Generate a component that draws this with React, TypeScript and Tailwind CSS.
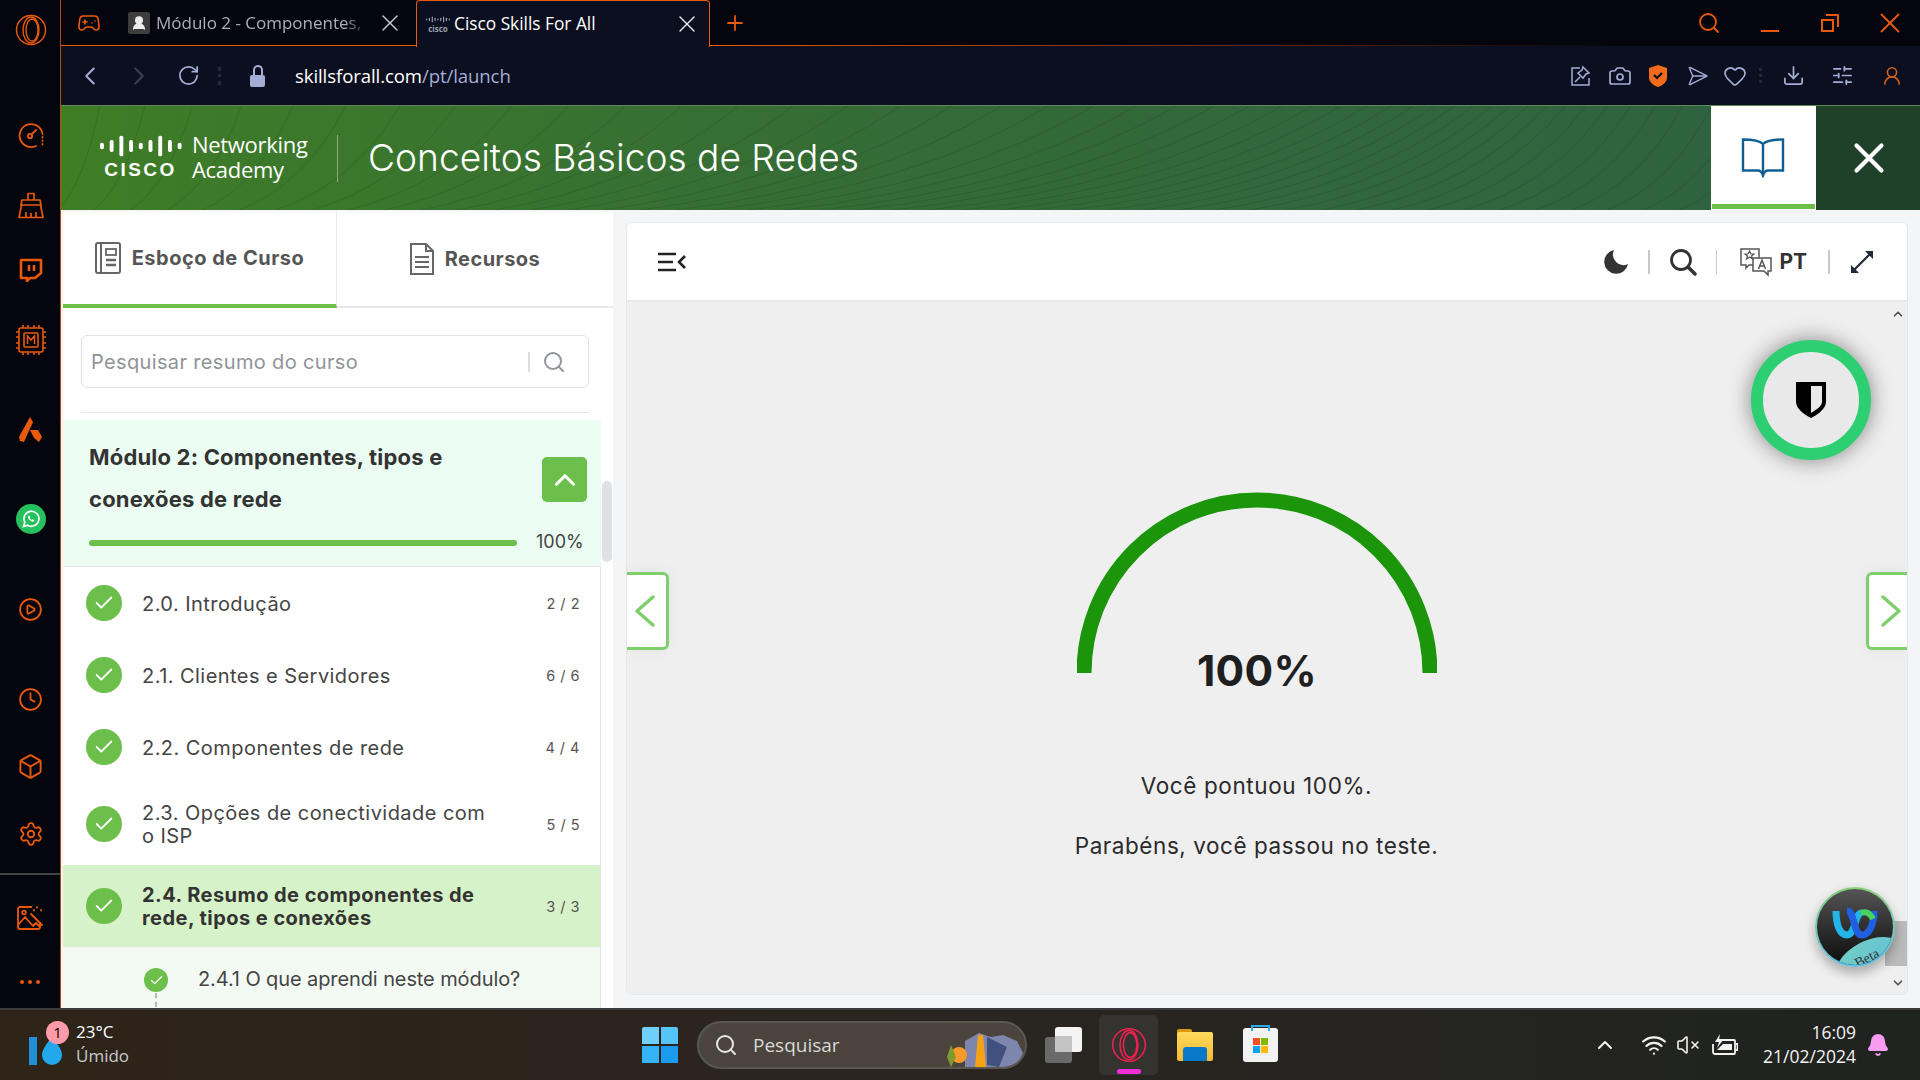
import React from "react";
import { Gamepad2, ChevronRight, RotateCw, Camera, Send, Heart, Download, SlidersHorizontal, UserRound, Search, X, Plus, Clock, Box, Settings, CirclePlay, Check, ChevronUp, ChevronDown, ChevronLeft, Wifi, VolumeX, Bell } from "lucide-react";

const O = "#e8590c";

function OperaLogo({ size = 32, color = O }: { size?: number; color?: string }) {
  return (
    <svg width={size} height={size} viewBox="0 0 32 32" fill="none" stroke={color} strokeWidth="1.4">
      <circle cx="16" cy="16" r="14.5" />
      <ellipse cx="16" cy="16" rx="8" ry="13" />
      <ellipse cx="17" cy="16" rx="6" ry="11" />
    </svg>
  );
}

function GaugeIcon() {
  return (
    <svg width="26" height="26" viewBox="0 0 26 26" fill="none" stroke={O} strokeWidth="1.8" strokeLinecap="round">
      <path d="M18 24A11.500 11.500 0 1 1 24.500 12" />
      <circle cx="12" cy="14" r="2.200" />
      <path d="M13.500 12.500L18 8" />
      <path d="M24.500 15v.5M24.500 18.500v.5M24.500 22v.5" />
    </svg>
  );
}

function TwitchIcon() {
  return (
    <svg width="24" height="24" viewBox="0 0 24 24" fill="none" stroke={O} strokeWidth="2.600" strokeLinejoin="round">
      <path d="M2 2h20v13l-6 5h-5l-3 3v-3H2z" />
      <path d="M10 7v6M15 7v6" />
    </svg>
  );
}

function PicturesIcon() {
  return (
    <svg width="28" height="26" viewBox="0 0 28 26" fill="none" stroke={O} strokeWidth="1.800" strokeLinejoin="round">
      <path d="M16 2H4a2 2 0 0 0-2 2v18a2 2 0 0 0 2 2h18a2 2 0 0 0 2-2v-5" />
      <path d="M2 20l7-8 8 9 3-3 4 4" />
      <circle cx="8" cy="7.500" r="1.800" />
      <path d="M15 9l11 11M21 2v.5M25 5v.5M18 5v.5" strokeLinecap="round" />
    </svg>
  );
}

function ChipIcon() {
  return (
    <svg width="32" height="32" viewBox="0 0 32 32" fill="none" stroke={O} strokeWidth="1.6">
      <rect x="4" y="4" width="24" height="24" rx="2" />
      <rect x="9" y="9" width="14" height="14" rx="1" />
      <path d="M8 1v3M13 1v3M19 1v3M24 1v3M8 28v3M13 28v3M19 28v3M24 28v3M1 8h3M1 13h3M1 19h3M1 24h3M28 8h3M28 13h3M28 19h3M28 24h3" />
      <path d="M12.5 20v-8l3.5 4 3.5-4v8" strokeWidth="1.5" />
    </svg>
  );
}

function BrushIcon() {
  return (
    <svg width="26" height="28" viewBox="0 0 26 28" fill="none" stroke={O} strokeWidth="1.7" strokeLinejoin="round">
      <path d="M10 9V2.500h6V9" />
      <path d="M4 9h18l1 5H3z" />
      <path d="M3.500 14L1 26.500h24L22.500 14M8 26v-5M13 26v-4M18 26v-5" />
    </svg>
  );
}

function AriaIcon() {
  return (
    <svg width="24" height="26" viewBox="0 0 24 26" fill={O}>
      <path d="M11 0l3 5L5 25 1 24 0 20z" />
      <path d="M11 13l8 0 4 7-3 5-5-4-3-6z" />
    </svg>
  );
}

function WhatsApp() {
  return (
    <div className="w-[30px] h-[30px] rounded-full bg-[#25c15f] flex items-center justify-center">
      <svg width="20" height="20" viewBox="0 0 24 24" fill="none" stroke="white" strokeWidth="2">
        <path d="M3 21l1.600-5A9 9 0 1 1 8 19.500z" />
        <path d="M9 8c-1 1-.8 2.800.8 4.700 1.700 1.900 3.700 3 5.200 2.300l1-1.500-2.200-1.200-1 .8c-1-.4-2-1.500-2.400-2.500l.8-1L10 8z" fill="white" stroke="none" />
      </svg>
    </div>
  );
}

const railItems: { h: number; el: React.ReactNode }[] = [
  { h: 60, el: <OperaLogo /> },
  { h: 39, el: null },
  { h: 72, el: <GaugeIcon /> },
  { h: 68, el: <BrushIcon /> },
  { h: 62, el: <TwitchIcon /> },
  { h: 78, el: <ChipIcon /> },
  { h: 102, el: <AriaIcon /> },
  { h: 76, el: <WhatsApp /> },
  { h: 104, el: <CirclePlay size={25} color={O} strokeWidth={1.7} /> },
  { h: 76, el: <Clock size={25} color={O} strokeWidth={1.7} /> },
  { h: 58, el: <Box size={27} color={O} strokeWidth={1.7} /> },
  { h: 78, el: <Settings size={26} color={O} strokeWidth={1.7} /> },
];

function Rail() {
  return (
    <aside className="w-[61px] shrink-0 bg-[#05060d] border-r border-[#b84a10] flex flex-col">
      {railItems.map((it, i) => (
        <div key={i} className="flex items-center justify-center shrink-0 pl-[1px]" style={{ height: it.h }}>
          {it.el}
        </div>
      ))}
      <div className="h-[2px] bg-[#444]" />
      <div className="h-[86px] flex items-center justify-center">
        <PicturesIcon />
      </div>
      <div className="h-[42px] flex items-center justify-center gap-[4px]">
        <span className="w-[4px] h-[4px] rounded-full bg-[#e8590c]" />
        <span className="w-[4px] h-[4px] rounded-full bg-[#e8590c]" />
        <span className="w-[4px] h-[4px] rounded-full bg-[#e8590c]" />
      </div>
    </aside>
  );
}

function CiscoBars({ color = "white", w = 82, h = 23 }: { color?: string; w?: number; h?: number }) {
  const bars = [[0, 6], [9, 11], [18, 19], [27, 11], [36, 6], [45, 11], [54, 19], [63, 11], [72, 6]];
  return (
    <svg width={w} height={h} viewBox="0 0 76 20" fill={color}>
      {bars.map(([x, bh], i) => (
        <rect key={i} x={x} y={(20 - bh) / 2} width="3.600" height={bh} rx="1.500" />
      ))}
    </svg>
  );
}

function TabBar() {
  return (
    <div className="h-[46px] shrink-0 bg-[#05060d] flex items-center relative font-['Open_Sans',sans-serif]">
      <div className="w-[54px] flex justify-center ml-[1px]">
        <Gamepad2 size={24} color={O} strokeWidth={1.6} />
      </div>
      <div className="flex items-center w-[288px] ml-[12px] h-full">
        <div className="w-[22px] h-[22px] bg-[#3d3d3d] rounded-[2px] flex items-center justify-center shrink-0">
          <UserRound size={16} color="#eee" fill="#eee" />
        </div>
        <span className="ml-[6px] text-[17px] text-[#aab0bb] w-[210px] overflow-hidden whitespace-nowrap [mask-image:linear-gradient(to_right,black_90%,transparent)]">Módulo 2 - Componentes, t</span>
        <X size={28} color="#c9ccd4" strokeWidth={1.2} className="ml-[10px]" />
      </div>
      <div className="h-[47px] w-[294px] -mb-[1px] bg-[#0c0f1f] border border-b-0 border-[#e8590c] rounded-t-[4px] flex items-center pl-[9px] relative z-10">
        <div className="flex flex-col items-center w-[24px] shrink-0 leading-none">
          <CiscoBars color="#9aa0ad" w={24} h={9} />
          <span className="text-[8px] font-bold text-[#9aa0ad] leading-[9px]">cisco</span>
        </div>
        <span className="ml-[4px] text-[17.300px] text-white whitespace-nowrap">Cisco Skills For All</span>
        <X size={28} color="#e8e8ee" strokeWidth={1.2} className="ml-auto mr-[8px]" />
      </div>
      <div className="ml-[13px]"><Plus size={24} color={O} strokeWidth={1.8} /></div>
      <div className="ml-auto flex items-center h-full">
        <Search size={24} color={O} strokeWidth={1.8} className="mr-[40px]" />
        <div className="w-[18px] h-[2px] bg-[#e8590c] mt-[16px] mr-[42px]" />
        <div className="relative w-[18px] h-[18px] mr-[34px]">
          <div className="absolute left-0 bottom-0 w-[13px] h-[13px] border-2 border-[#e8590c]" />
          <div className="absolute right-0 top-0 w-[13px] h-[13px] border-t-2 border-r-2 border-[#e8590c] rounded-tr-[2px]" />
        </div>
        <X size={34} color={O} strokeWidth={1.3} className="mr-[13px]" />
      </div>
      <div className="absolute left-0 bottom-0 w-[356px] h-px bg-[#e8590c]" />
      <div className="absolute left-[649px] bottom-0 w-[900px] h-px bg-gradient-to-r from-[#e8590c] to-transparent" />
    </div>
  );
}

function AddressBar() {
  const c = "#a3aed6";
  return (
    <div className="h-[59px] shrink-0 bg-[#0c0f1f] flex items-center font-['Open_Sans',sans-serif]">
      <ChevronLeft size={30} color={c} strokeWidth={1.6} className="ml-[14px]" />
      <ChevronRight size={30} color="#3a4056" strokeWidth={1.6} className="ml-[19px]" />
      <RotateCw size={23} color={c} strokeWidth={1.8} className="ml-[23px]" />
      <div className="ml-[18px] w-[3px] h-[18px] border-l-[3px] border-dotted border-[#22283f]" />
      <div className="ml-[29px] w-[15px] h-[22px] flex flex-col items-center">
        <div className="w-[10px] h-[10px] border-2 border-b-0 border-[#a3aed6] rounded-t-[5px]" />
        <div className="w-[15px] h-[12px] bg-[#a3aed6] rounded-[2px]" />
      </div>
      <div className="ml-[30px] text-[18.600px] tracking-[-0.1px]">
        <span className="text-white">skillsforall.com</span>
        <span className="text-[#a3aed6]">/pt/launch</span>
      </div>
      <div className="ml-auto flex items-center">
        <svg width="22" height="22" viewBox="0 0 22 22" fill="none" stroke={c} strokeWidth="1.5" className="mr-[16px]">
          <path d="M10 3H2v17h17v-7" />
          <path d="M5 17l5-5M13 2l6 6-3 1-3 4-5-5 4-3z" />
        </svg>
        <Camera size={24} color={c} strokeWidth={1.7} className="mr-[16px]" />
        <svg width="20" height="24" viewBox="0 0 20 24" className="mr-[15px]">
          <path d="M10 1l9 3v10c0 4-5 8-9 9-4-1-9-5-9-9V4z" fill="#f26a1b" />
          <path d="M6 11l3 3 5-5" fill="none" stroke="#0c0f1f" strokeWidth="2.200" />
        </svg>
        <Send size={22} color={c} strokeWidth={1.5} className="mr-[18px] rotate-45" />
        <Heart size={24} color={c} strokeWidth={1.7} className="mr-[12px]" />
        <div className="w-[3px] h-[15px] border-l-[3px] border-dotted border-[#22283f] mr-[20px]" />
        <Download size={23} color={c} strokeWidth={1.8} className="mr-[26px]" />
        <SlidersHorizontal size={23} color={c} strokeWidth={1.8} className="mr-[27px]" />
        <UserRound size={22} color="#c9601e" strokeWidth={1.8} className="mr-[17px]" />
      </div>
    </div>
  );
}

function GreenLines() {
  const starts = Array.from({ length: 66 }, (_, i) => -400 + i * 36);
  return (
    <svg className="absolute inset-0" width="1650" height="105" viewBox="0 0 1650 105" fill="none" stroke="#000" strokeOpacity="0.11" strokeWidth="1">
      {starts.map((x, i) => {
        const p = Math.max(0, Math.min(1, (x + 100) / 1750));
        const run = 30 + 300 * Math.pow(Math.sin(Math.PI * p), 2) + 70 * p;
        return <path key={i} d={`M${x} 105 Q ${x + run * 0.62} ${80} ${x + run} 0`} />;
      })}
    </svg>
  );
}

function Header() {
  return (
    <div className="h-[105px] shrink-0 flex border-t border-[#5d8a5d]">
      <div className="flex-1 relative flex items-center bg-gradient-to-r from-[#3f7d25] via-[#346b36] to-[#2f6340] overflow-hidden">
        <GreenLines />
        <div className="relative ml-[37px] w-[85px] flex flex-col items-center text-white">
          <CiscoBars w={82} h={24} />
          <span className="text-[19px] font-bold tracking-[2.500px] leading-[24px] font-['Liberation_Sans',sans-serif]">CISCO</span>
        </div>
        <div className="relative ml-[9px] text-white text-[22px] leading-[25px] font-['Open_Sans',sans-serif] w-[135px] -mt-[3px] whitespace-nowrap">
          <div className="tracking-[-0.3px]">Networking</div>
          <div className="tracking-[-0.3px]">Academy</div>
        </div>
        <div className="relative w-px h-[47px] bg-white/40 ml-[10px]" />
        <div className="relative ml-[30px] -mt-[1px] text-white text-[37.150px] font-light font-['Inter',sans-serif] whitespace-nowrap">Conceitos Básicos de Redes</div>
      </div>
      <div className="w-[105px] bg-white flex flex-col items-center relative">
        <svg width="44" height="40" viewBox="0 0 44 40" fill="none" stroke="#0f5f92" strokeWidth="2.400" className="mt-[32px] -ml-[2px]">
          <path d="M22 6C18 2 8 1.500 2 1.500v31h15c3 0 4 2 5 5 1-3 2-5 5-5h15v-31C36 1.500 26 2 22 6zM22 6v29" />
        </svg>
        <div className="absolute left-[1px] right-[1px] bottom-[1px] h-[5px] bg-[#6cc04a]" />
      </div>
      <div className="w-[104px] bg-[#1f4029] flex items-center justify-center pl-[2px]">
        <X size={50} color="white" strokeWidth={2} />
      </div>
    </div>
  );
}

const rows = [
  { t: "2.0. Introdução", n: "2 / 2", h: 72 },
  { t: "2.1. Clientes e Servidores", n: "6 / 6", h: 72 },
  { t: "2.2. Componentes de rede", n: "4 / 4", h: 72 },
  { t: "2.3. Opções de conectividade com o ISP", n: "5 / 5", h: 82 },
  { t: "2.4. Resumo de componentes de rede, tipos e conexões", n: "3 / 3", h: 82, active: true },
];

function CheckDot({ size = 36, icon = 22 }: { size?: number; icon?: number }) {
  return (
    <div className="rounded-full bg-[#6cbf4b] flex items-center justify-center shrink-0" style={{ width: size, height: size }}>
      <Check size={icon} color="white" strokeWidth={2} />
    </div>
  );
}

function LeftPanel() {
  return (
    <div className="w-[550px] shrink-0 bg-white flex flex-col overflow-hidden relative mt-[2px] ml-[2px] font-['Inter',sans-serif]">
      <div className="h-[96px] flex shrink-0 border-b-2 border-[#e8e9eb] text-[#555]">
        <div className="w-[274px] -mb-[2px] border-b-4 border-[#6cbf4b] border-r border-r-[#e8e9eb] flex items-center justify-center gap-[11px] font-bold">
          <svg width="26" height="32" viewBox="0 0 26 32" fill="none" stroke="#666" strokeWidth="2">
            <rect x="1" y="1" width="24" height="30" rx="2" />
            <path d="M6 1v30" />
            <rect x="11" y="7" width="10" height="6" strokeWidth="1.800" />
            <path d="M11 18h10M11 23h10" strokeWidth="2.400" />
          </svg>
          <span className="text-[20px] tracking-[0.5px]">Esboço de Curso</span>
        </div>
        <div className="flex-1 flex items-center justify-center gap-[11px] font-bold">
          <svg width="24" height="32" viewBox="0 0 24 32" fill="none" stroke="#666" strokeWidth="2">
            <path d="M1 1h15l7 7v23H1z" />
            <path d="M16 1v7h7M5 14h14M5 19h14M5 24h14" />
          </svg>
          <span className="text-[20px] tracking-[0.45px]">Recursos</span>
        </div>
      </div>
      <div className="ml-[18px] mr-[24px] mt-[27px] h-[53px] shrink-0 border border-[#e0e2e5] rounded-[6px] flex items-center pl-[9px]">
        <span className="text-[20px] tracking-[0.35px] text-[#8f9499] flex-1">Pesquisar resumo do curso</span>
        <div className="w-[2px] h-[20px] bg-[#ddd] mr-[12px]" />
        <Search size={24} color="#8f9499" strokeWidth={2} className="mr-[22px]" />
      </div>
      <div className="ml-[18px] mr-[24px] mt-[24px] h-px shrink-0 bg-[#e6e7e9]" />
      <div className="mt-[7px] w-[538px] h-[147px] shrink-0 bg-[#ebfcf2] border-b border-[#e3e5e7] flex flex-col pl-[26px] pr-[14px]">
        <div className="flex items-start">
          <div className="flex-1 text-[22px] font-bold leading-[42px] tracking-[0.2px] text-[#333] pt-[16px] pr-[30px]">Módulo 2: Componentes, tipos e conexões de rede</div>
          <div className="w-[45px] h-[45px] mt-[37px] rounded-[5px] bg-[#6cbf4b] flex items-center justify-center shrink-0">
            <ChevronUp size={34} color="white" strokeWidth={2.200} />
          </div>
        </div>
        <div className="flex items-center mt-[11px]">
          <div className="w-[428px] h-[6px] rounded-full bg-[#6cbf4b]" />
          <span className="ml-[19px] text-[18px] text-[#444] -mt-[3px]">100%</span>
        </div>
      </div>
      <div className="w-[538px] border-r border-[#e6e7e9] flex-1">
        {rows.map((r) => (
          <div key={r.t} className={`flex items-center pl-[23px] pr-[20px] ${r.active ? "bg-[#d6f2c8]" : ""}`} style={{ height: r.h }}>
            <CheckDot />
            <div className={`ml-[20px] mt-[2px] w-[350px] text-[20px] leading-[23px] tracking-[0.45px] ${r.active ? "font-bold text-[#333]" : "text-[#444]"}`}>{r.t}</div>
            <div className="ml-auto mt-[1px] text-[14.500px] text-[#555] tracking-[0.5px]">{r.n}</div>
          </div>
        ))}
        <div className="bg-[#f3faf3] h-[61px] flex pl-[81px] relative">
          <div className="mt-[21px] flex flex-col items-center">
            <CheckDot size={24} icon={15} />
            <div className="h-[14px] mt-[1px] border-l-2 border-dashed border-[#b5b5b5]" />
          </div>
          <div className="ml-[30px] mt-[20px] text-[20px] tracking-[-0.1px] text-[#444] leading-[24px]">2.4.1 O que aprendi neste módulo?</div>
        </div>
      </div>
      <div className="absolute right-[1px] top-[269px] w-[10px] h-[81px] rounded-full bg-[#dfe1e5]" />
    </div>
  );
}

function Translate() {
  return (
    <svg width="34" height="30" viewBox="0 0 34 30" fill="none" stroke="#555" strokeWidth="1.500">
      <path d="M2 2h18v16H10l-3 3v-3H2z" fill="white" />
      <path d="M14 11h18v13h-3v4l-4-4H14z" fill="white" />
      <path d="M10.500 4l1.500 3h3l-2.500 2 1 3-3-2-3 2 1-3-2.500-2h3z" strokeWidth="1.200" />
      <path d="M19.500 22l3.500-9 3.500 9M20.800 19h4.400" />
    </svg>
  );
}

function NavChevron({ right = false }: { right?: boolean }) {
  return (
    <svg width="20" height="32" viewBox="0 0 20 32" fill="none" stroke="#80cf6f" strokeWidth="3.500" strokeLinecap="round" strokeLinejoin="round">
      <path d={right ? "M2 2l16 14L2 30" : "M18 2L2 16l16 14"} />
    </svg>
  );
}

function RightPanel() {
  return (
    <div className="w-[1282px] h-[773px] ml-[13px] mt-[12px] flex flex-col rounded-[6px] border border-[#e6e7e9] overflow-hidden font-['Inter',sans-serif] relative">
      <div className="h-[79px] shrink-0 bg-white flex items-center border-b-2 border-[#e8e9eb]">
        <svg width="30" height="20" viewBox="0 0 30 20" fill="none" stroke="#222" strokeWidth="2.600" className="ml-[30px]">
          <path d="M1 2h18M1 10h15M1 18h18M28 4l-6 6 6 6" />
        </svg>
        <div className="ml-auto flex items-center">
          <svg width="25" height="25" viewBox="0 0 25 25" className="mr-[19px]">
            <path d="M10 1A12 12 0 1 0 24 15 10.500 10.500 0 0 1 10 1z" fill="#333" />
          </svg>
          <div className="w-[2px] h-[24px] bg-[#c8c8c8] mr-[19px]" />
          <svg width="28" height="28" viewBox="0 0 28 28" fill="none" stroke="#333" strokeWidth="2.800" className="mr-[19px]">
            <circle cx="12" cy="12" r="9.500" />
            <path d="M19 19l7 7" strokeWidth="3.500" strokeLinecap="round" />
          </svg>
          <div className="w-px h-[24px] bg-[#c8c8c8] mr-[22px]" />
          <Translate />
          <span className="ml-[6px] text-[21px] font-bold text-[#333] mr-[21px]">PT</span>
          <div className="w-[2px] h-[24px] bg-[#c8c8c8] mr-[19px]" />
          <svg width="26" height="26" viewBox="0 0 26 26" fill="none" stroke="#1f2937" strokeWidth="2.200" className="mr-[32px]">
            <path d="M5 21L21 5" />
            <path d="M16 2h8v8z M2 16v8h8z" fill="#1f2937" stroke="none" />
          </svg>
        </div>
      </div>
      <div className="flex-1 bg-[#efefef] flex flex-col items-center relative pr-[20px]">
        <div className="relative mt-[190px] w-[360px] h-[181px]">
          <svg width="360" height="181" viewBox="0 0 360 181" fill="none">
            <path d="M7 181A173 173 0 0 1 353 181" stroke="#1b950a" strokeWidth="15" />
          </svg>
          <div className="absolute left-0 right-0 bottom-[-24px] text-center text-[42.500px] font-bold leading-[52px] text-[#1f1f1f] tracking-[0.3px]">100%</div>
        </div>
        <p className="mt-[98px] text-[22.500px] leading-[30px] tracking-[0.6px] text-[#2a2a2a] -ml-[1px]">Você pontuou 100%.</p>
        <p className="mt-[30px] text-[22.500px] leading-[30px] tracking-[0.55px] text-[#2a2a2a] -ml-[1px]">Parabéns, você passou no teste.</p>

        <div className="absolute left-0 top-[270px] w-[42px] h-[78px] bg-white border-[3px] border-l-0 border-[#80cf6f] rounded-r-[6px] flex items-center justify-center pr-[3px] shadow-[0_0_14px_rgba(0,0,0,0.06)]">
          <NavChevron />
        </div>
        <div className="absolute right-0 top-[270px] w-[41px] h-[78px] bg-white border-[3px] border-r-0 border-[#80cf6f] rounded-l-[6px] flex items-center justify-center pl-[6px] shadow-[0_0_14px_rgba(0,0,0,0.06)]">
          <NavChevron right />
        </div>

        <ChevronUp size={14} color="#555" strokeWidth={3} className="absolute right-[2px] top-[5px]" />
        <ChevronDown size={14} color="#555" strokeWidth={3} className="absolute right-[2px] bottom-[4px]" />
        <div className="absolute right-0 top-[619px] w-[22px] h-[45px] bg-[#bbbbbb]" />

        <div className="absolute left-[1124px] top-[38px] w-[120px] h-[120px] rounded-full bg-[#e9e9e9] border-[12px] border-[#2ecf72] shadow-[0_0_22px_rgba(0,0,0,0.45)] flex items-center justify-center">
          <svg width="30" height="36" viewBox="0 0 30 36">
            <path d="M0 0h30v20c0 7-9 13-15 16C9 33 0 27 0 20z" fill="#000" />
            <path d="M15 4h11v16c0 4-6 8-11 11z" fill="#e9e9e9" />
          </svg>
        </div>

        <div className="absolute left-[1188px] top-[585px] w-[80px] h-[80px] rounded-full p-[2px] bg-gradient-to-b from-[#8ccf7a] to-[#5ebde0] shadow-[0_6px_12px_rgba(0,0,0,0.3)]">
          <div className="w-full h-full rounded-full bg-gradient-to-b from-[#555] to-[#0e0e0e] relative overflow-hidden flex items-start justify-center">
            <svg width="48" height="36" viewBox="0 0 48 36" fill="none" className="mt-[16px]">
              <path d="M5 6c0 14 4 24 11 24 9 0 7-22 15-22" stroke="#23b5e8" strokeWidth="7" />
              <path d="M16 6c8 0 6 24 15 24 7 0 12-10 12-24" stroke="#1f5fe0" strokeWidth="7" />
              <path d="M30 8c5-2 9 0 12 6" stroke="#45d45f" strokeWidth="6" />
            </svg>
            <div className="absolute -right-[12px] -bottom-[18px] w-[72px] h-[42px] rounded-[50%] bg-gradient-to-br from-[#74cfc0] to-[#5ebde0] -rotate-[28deg] flex items-center justify-center">
              <span className="font-['Liberation_Serif',serif] text-[14px] text-[#333] -mt-[10px]">Beta</span>
            </div>
          </div>
        </div>
      </div>
    </div>
  );
}

function Taskbar() {
  return (
    <div className="h-[72px] shrink-0 border-t-2 border-[#3b3b3b] bg-gradient-to-r from-[#2e2418] via-[#2a2520] to-[#1f2320] flex items-center relative font-['Open_Sans',sans-serif]">
      <div className="ml-[29px] relative w-[36px] h-[56px] shrink-0">
        <div className="absolute left-0 top-[20px] w-[8px] h-[28px] bg-[#1f8fd8]" />
        <svg width="20" height="30" viewBox="0 0 20 30" className="absolute left-[13px] top-[19px]">
          <path d="M10 0c5 8 10 13 10 19a10 10 0 0 1-20 0C0 13 5 8 10 0z" fill="#22a7ea" />
        </svg>
        <div className="absolute left-[17px] top-[4px] w-[23px] h-[23px] rounded-full bg-[#ff9aa8] flex items-center justify-center text-[15px] text-black">1</div>
      </div>
      <div className="ml-[11px] -mt-[3px] flex flex-col text-[17px] leading-[24px] w-[80px]">
        <span className="text-white">23°C</span>
        <span className="text-[#c9c9c9]">Úmido</span>
      </div>
      <div className="ml-[486px] grid grid-cols-2 gap-[2px] w-[36px] h-[36px] shrink-0">
        <div className="bg-[#6fd1fb] rounded-tl-[2px]" />
        <div className="bg-[#55c4f8] rounded-tr-[2px]" />
        <div className="bg-[#34b3f5]" />
        <div className="bg-[#1a9bf0]" />
      </div>
      <div className="ml-[19px] w-[330px] h-[48px] rounded-full bg-[#4a443d] border-2 border-[#5a5650] flex items-center relative overflow-hidden">
        <Search size={24} color="#e6e6e6" strokeWidth={2} className="ml-[15px]" />
        <span className="ml-[15px] text-[19px] text-[#d8d8d8]">Pesquisar</span>
        <svg width="78" height="44" viewBox="0 0 78 44" className="absolute right-0 top-0">
          <path d="M18 44V18l14-8 12 4 12-2 14 6 6 12-6 14z" fill="#7e86ad" />
          <circle cx="12" cy="32" r="8" fill="#f79a2a" />
          <path d="M4 22l-4 12 4 10 5-10z" fill="#7f9a2e" />
          <path d="M28 44l3-32h5l3 32z" fill="#f6a313" />
          <path d="M40 14l20 10-8 20-12-2z" fill="#41507e" />
        </svg>
      </div>
      <div className="ml-[18px] relative w-[37px] h-[36px] shrink-0">
        <div className="absolute left-0 bottom-0 w-[27px] h-[26px] bg-[#6a6a6a] rounded-[3px]" />
        <div className="absolute right-0 top-0 w-[27px] h-[25px] bg-[#f4f4f4] rounded-[3px]" />
        <div className="absolute left-[10px] top-[9px] w-[17px] h-[16px] bg-[#c4c4c4] rounded-[1px]" />
      </div>
      <div className="ml-[17px] w-[59px] h-[60px] rounded-[5px] bg-[#35332f] flex items-center justify-center relative shrink-0">
        <OperaLogo size={36} color="#e8214e" />
        <div className="absolute bottom-[1px] left-[18px] w-[24px] h-[5px] rounded-full bg-[#f02fd8]" />
      </div>
      <div className="ml-[19px] w-[36px] h-[32px] relative shrink-0">
        <div className="absolute left-0 top-0 w-[15px] h-[8px] bg-[#d99a0b] rounded-t-[2px]" />
        <div className="absolute left-0 top-[3px] w-[36px] h-[29px] bg-gradient-to-b from-[#ffd95c] to-[#f5bb2e] rounded-[2px]" />
        <div className="absolute left-[6px] bottom-0 w-[24px] h-[14px] bg-[#0a78c8] rounded-t-[3px]" />
      </div>
      <div className="ml-[30px] w-[35px] h-[34px] bg-[#f2f2f2] rounded-[3px] shrink-0 relative flex items-center justify-center">
        <div className="absolute -top-[3px] left-[8px] w-[19px] h-[6px] border-2 border-b-0 border-[#2aa9e8]" />
        <div className="grid grid-cols-2 gap-px w-[15px] h-[15px]">
          <div className="bg-[#f25022]" />
          <div className="bg-[#7fba00]" />
          <div className="bg-[#00a4ef]" />
          <div className="bg-[#ffb900]" />
        </div>
      </div>
      <div className="ml-auto flex items-center">
        <ChevronUp size={24} color="#f2f2f2" strokeWidth={2} className="mr-[24px]" />
        <Wifi size={26} color="#f2f2f2" strokeWidth={2} className="mr-[9px]" />
        <VolumeX size={24} color="#f2f2f2" strokeWidth={1.600} className="mr-[12px]" />
        <svg width="26" height="24" viewBox="0 0 26 24" fill="none" stroke="#f2f2f2" strokeWidth="1.800" className="mr-[25px]">
          <path d="M6 7h16a1 1 0 0 1 1 1v12a1 1 0 0 1-1 1H3a2 2 0 0 1-2-2V11" />
          <path d="M24 11h1.500v6H24" />
          <path d="M8 1L3 9h4l-2 6 6-8H7z" fill="#f2f2f2" stroke="none" />
          <path d="M11 11h9v6H5" fill="#f2f2f2" stroke="none" />
        </svg>
        <div className="flex flex-col items-end text-[17.500px] leading-[24px] text-[#f2f2f2] mr-[10px] -mt-[3px]">
          <span>16:09</span>
          <span>21/02/2024</span>
        </div>
        <Bell size={24} color="#f79cf0" fill="#f79cf0" className="mr-[30px]" />
      </div>
    </div>
  );
}

export default function App() {
  return (
    <div className="w-[1920px] h-[1080px] flex flex-col overflow-hidden bg-[#05060d]">
      <div className="flex h-[1008px] shrink-0">
        <Rail />
        <div className="flex-1 flex flex-col min-w-0">
          <TabBar />
          <AddressBar />
          <Header />
          <div className="flex-1 flex bg-[#f4f5f7] min-h-0">
            <LeftPanel />
            <RightPanel />
          </div>
        </div>
      </div>
      <Taskbar />
    </div>
  );
}
